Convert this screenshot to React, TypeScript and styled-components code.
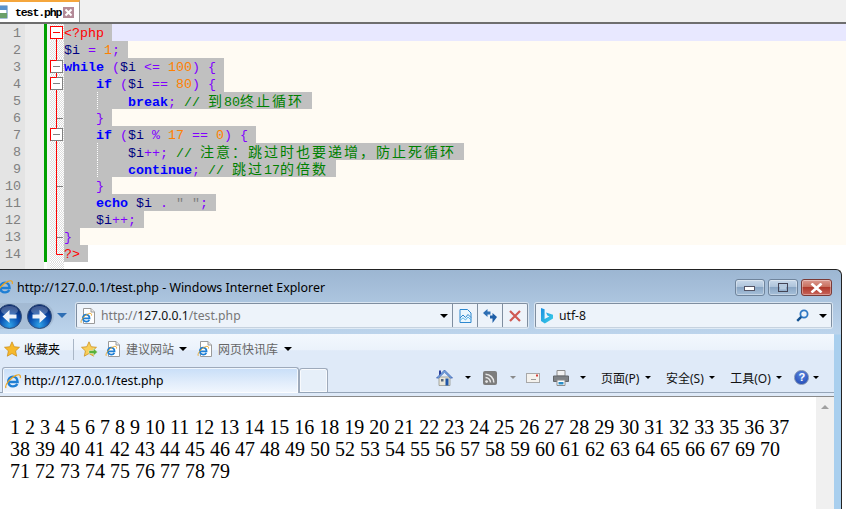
import React from "react";
import styled, { createGlobalStyle } from "styled-components";

const Global = createGlobalStyle`
  html, body { margin: 0; padding: 0; background: #fff; overflow: hidden; }
`;

const UI_FONT = `"Noto Sans", "Noto Sans CJK SC", sans-serif`;

const Page = styled.div`
  width: 846px;
  height: 509px;
  display: flex;
  flex-direction: column;
  overflow: hidden;
  background: #fff;
`;

/* ---------- editor ---------- */
const TabStrip = styled.div`
  height: 22px;
  display: flex;
  background: #f0f0f0;
  border-bottom: 2px solid #6e6e6e;
`;
const EditorTab = styled.div`
  width: 80px;
  box-sizing: border-box;
  border-top: 2px solid #f5a63c;
  border-right: 1px solid #9a9a9a;
  background: #fff;
  display: flex;
  align-items: center;
  color: #000;
`;
const TabName = styled.span`
  margin: 0 2px 0 7px;
  font: 700 11.5px "Liberation Mono", monospace;
  letter-spacing: -1.1px;
  white-space: pre;
`;
const Editor = styled.div`
  display: flex;
  flex-direction: column;
  height: 245px;
`;
const Row = styled.div<{ $h?: number }>`
  display: flex;
  height: ${(p) => p.$h ?? 17}px;
  flex: none;
`;
const Gutter = styled.div`
  width: 44px;
  height: 100%;
  box-sizing: border-box;
  background: linear-gradient(90deg, #e4e4e4 0 25px, #ececec 25px);
  color: #808080;
  font: 13.33px/20px "Liberation Mono", monospace;
`;
const LineNo = styled.div`
  width: 21px;
  height: 17px;
  text-align: right;
`;
const Bar = styled.div<{ $on: boolean }>`
  width: 3px;
  margin-right: 3px;
  background: ${(p) => (p.$on ? "#00a000" : "transparent")};
  box-shadow: 3px 0 0 #f4f4f4;
`;
const FoldCol = styled.div`
  width: 14px;
  height: 100%;
  background: repeating-conic-gradient(#dcdcdc 0 25%, #fff 0 50%) 0 0 / 2px 2px;
  svg { display: block; }
`;
const Code = styled.div<{ $bg: string }>`
  flex: 1;
  height: 100%;
  background: ${(p) => p.$bg};
  font: 13.33px/20px "Liberation Mono", monospace;
  white-space: pre;
`;
const Sel = styled.span`
  display: inline-block;
  vertical-align: top;
  height: 17px;
  background: #c0c0c0;
  padding-right: 8px;
  color: #000;
`;
const Guide = styled.span`
  display: inline-block;
  vertical-align: top;
  width: 64px;
  height: 17px;
  background: repeating-linear-gradient(#fff 0 1px, transparent 1px 2px) 33px 0 / 1px 100% no-repeat;
`;
const Kw = styled.b`color: #0000ff; font-weight: 700;`;
const Var = styled.span`color: #000080;`;
const Op = styled.span`color: #8000ff;`;
const Num = styled.span`color: #ff8000;`;
const Str = styled.span`color: #808080;`;
const Tag = styled.span`color: #ff0000;`;
const Cm = styled.span`color: #008000;`;
const Cjk = styled.span`
  font: 14px/17px "Noto Sans CJK SC", sans-serif;
  letter-spacing: 2px;
  color: #008000;
`;

type FoldKind = "open" | "box" | "line" | "tick" | "end" | "none";
const Fold = ({ kind }: { kind: FoldKind }) => (
  <svg width="14" height="17" viewBox="0 0 14 17">
    {kind === "open" && (
      <>
        <rect x="0.5" y="2.5" width="12" height="12" fill="#fff" stroke="#ff0000" />
        <path d="M3 8.5h7" stroke="#ff0000" />
        <path d="M6.5 15v2" stroke="#ff0000" />
      </>
    )}
    {kind === "box" && (
      <>
        <path d="M6.5 0v2M6.5 15v2" stroke="#ff0000" />
        <rect x="0.5" y="2.5" width="12" height="12" fill="#fff" stroke="#808080" />
        <path d="M0.5 14.5v-12h6" fill="none" stroke="#ff0000" />
        <path d="M3 8.5h7" stroke="#808080" />
      </>
    )}
    {kind === "line" && <path d="M6.5 0v17" stroke="#ff0000" />}
    {kind === "tick" && (
      <>
        <path d="M6.5 0v17" stroke="#ff0000" />
        <path d="M7 9.5h6" stroke="#808080" />
      </>
    )}
    {kind === "end" && <path d="M6.5 0v9.5h6.5" fill="none" stroke="#ff0000" />}
  </svg>
);

const lines: { fold: FoldKind; guide?: boolean; content: React.ReactNode }[] = [
  { fold: "open", content: <Tag>{"<?php"}</Tag> },
  { fold: "line", content: <><Var>$i</Var> <Op>=</Op> <Num>1</Num><Op>;</Op></> },
  { fold: "box", content: <><Kw>while</Kw> <Op>(</Op><Var>$i</Var> <Op>{"<="}</Op> <Num>100</Num><Op>)</Op> <Op>{"{"}</Op></> },
  { fold: "box", content: <>{"    "}<Kw>if</Kw> <Op>(</Op><Var>$i</Var> <Op>==</Op> <Num>80</Num><Op>)</Op> <Op>{"{"}</Op></> },
  { fold: "line", guide: true, content: <><Kw>break</Kw><Op>;</Op> <Cm>// </Cm><Cjk>到</Cjk><Cm>80</Cm><Cjk>终止循环</Cjk></> },
  { fold: "tick", content: <>{"    "}<Op>{"}"}</Op></> },
  { fold: "box", content: <>{"    "}<Kw>if</Kw> <Op>(</Op><Var>$i</Var> <Op>%</Op> <Num>17</Num> <Op>==</Op> <Num>0</Num><Op>)</Op> <Op>{"{"}</Op></> },
  { fold: "line", guide: true, content: <><Var>$i</Var><Op>++;</Op> <Cm>// </Cm><Cjk>注意：跳过时也要递增，防止死循环</Cjk></> },
  { fold: "line", guide: true, content: <><Kw>continue</Kw><Op>;</Op> <Cm>// </Cm><Cjk>跳过</Cjk><Cm>17</Cm><Cjk>的倍数</Cjk></> },
  { fold: "tick", content: <>{"    "}<Op>{"}"}</Op></> },
  { fold: "line", content: <>{"    "}<Kw>echo</Kw> <Var>$i</Var> <Op>.</Op> <Str>{'" "'}</Str><Op>;</Op></> },
  { fold: "line", content: <>{"    "}<Var>$i</Var><Op>++;</Op></> },
  { fold: "tick", content: <Op>{"}"}</Op> },
  { fold: "end", content: <Tag>{"?>"}</Tag> },
];

/* ---------- browser window ---------- */
const Win = styled.div`
  width: 842px;
  flex: 1;
  min-height: 0;
  box-sizing: border-box;
  border-top: 1px solid #222;
  border-right: 1px solid #222;
  border-top-right-radius: 6px;
  display: flex;
  flex-direction: column;
  background: linear-gradient(#9cb6d2 0, #bcd4ec 64px, #a9cfee 65px);
  overflow: hidden;
`;
const TitleBar = styled.div`
  height: 28px;
  flex: none;
  display: flex;
  align-items: flex-start;
  box-sizing: border-box;
  padding-top: 9px;
  font: 12.4px/17px ${UI_FONT};
  color: #000;
`;
const TitleIcon = styled.span`
  margin-left: -3px;
  display: flex;
`;
const TitleText = styled.span`
  margin-left: 4px;
  flex: 1;
  white-space: nowrap;
`;
const Caption = styled.div`
  display: flex;
  gap: 3px;
  margin: 0 9px 0 0;
`;
const CapBtn = styled.div<{ $close?: boolean }>`
  width: ${(p) => (p.$close ? 31 : 30)}px;
  height: 17px;
  box-sizing: border-box;
  border: 1px solid ${(p) => (p.$close ? "#7a3a36" : "#6f849c")};
  border-radius: 3px;
  display: flex;
  align-items: center;
  justify-content: center;
  background: ${(p) =>
    p.$close
      ? "linear-gradient(#dc9a90 0, #c8705f 45%, #b03a2c 50%, #c8645a 100%)"
      : "linear-gradient(#c9d9ea 0, #aec4db 45%, #8aa6c4 50%, #a7c0da 100%)"};
  box-shadow: inset 0 0 0 1px rgba(255, 255, 255, 0.35);
`;
const NavBar = styled.div`
  height: 36px;
  flex: none;
  display: flex;
  align-items: flex-start;
  padding-top: 5px;
  box-sizing: border-box;
`;
const NavPill = styled.div`
  width: 54px;
  height: 26px;
  display: flex;
  gap: 5px;
  align-items: center;
  border-radius: 0 14px 14px 0;
  background: rgba(150, 170, 195, 0.45);
  svg { flex: none; display: block; }
`;
const BackSlot = styled.span`
  margin-left: -3px;
  display: flex;
`;
const Caret = styled.span<{ $c?: string; $ml?: number; $mr?: number; $mt?: number; $w?: number }>`
  flex: none;
  width: 0;
  height: 0;
  margin: ${(p) => p.$mt ?? 0}px ${(p) => p.$mr ?? 0}px 0 ${(p) => p.$ml ?? 0}px;
  border-left: ${(p) => p.$w ?? 4.5}px solid transparent;
  border-right: ${(p) => p.$w ?? 4.5}px solid transparent;
  border-top: ${(p) => p.$w ?? 4.5}px solid ${(p) => p.$c ?? "#000"};
`;
const Field = styled.div<{ $w: number; $ml: number }>`
  width: ${(p) => p.$w}px;
  margin-left: ${(p) => p.$ml}px;
  height: 25px;
  box-sizing: border-box;
  border: 1px solid #7f8ea0;
  border-bottom-color: #c6d2df;
  border-radius: 2px;
  background: #edf3fa;
  box-shadow: 0 0 0 1px rgba(255, 255, 255, 0.55);
  display: flex;
  align-items: center;
  font: 12.2px ${UI_FONT};
  overflow: hidden;
  svg { flex: none; display: block; }
`;
const FieldIcon = styled.span<{ $ml: number }>`
  margin-left: ${(p) => p.$ml}px;
  display: flex;
`;
const Url = styled.span`
  color: #777;
  margin-left: 5px;
  flex: 1;
  white-space: nowrap;
`;
const Host = styled.span`color: #111;`;
const FieldBtn = styled.div`
  width: 25px;
  height: 100%;
  flex: none;
  border-left: 1px solid #7f8ea0;
  box-sizing: border-box;
  display: flex;
  align-items: center;
  justify-content: center;
`;
const SearchText = styled.span`
  flex: 1;
  margin-left: 6px;
  color: #111;
`;
const Panel = styled.div`
  width: 834px;
  flex: 1;
  min-height: 0;
  display: flex;
  flex-direction: column;
  background: #fff;
`;
const FavBar = styled.div`
  height: 32px;
  flex: none;
  display: flex;
  align-items: center;
  padding: 0 0 2px 4px;
  box-sizing: border-box;
  background: linear-gradient(#f3f8fe 0, #ebf2fb 50%, #dfeaf8 52%);
  font: 12px ${UI_FONT};
  svg { flex: none; display: block; }
`;
const FavLabel = styled.span<{ $ml: number; $muted?: boolean }>`
  margin-left: ${(p) => p.$ml}px;
  color: ${(p) => (p.$muted ? "#666" : "#000")};
  white-space: nowrap;
`;
const FavIcon = styled.span<{ $ml: number }>`
  margin-left: ${(p) => p.$ml}px;
  display: flex;
`;
const VRule = styled.span`
  width: 1px;
  height: 21px;
  margin-left: 13px;
  background: #a9b6c6;
`;
const TabBar = styled.div`
  height: 27px;
  flex: none;
  display: flex;
  align-items: flex-start;
  box-sizing: border-box;
  background: #dfeaf8;
  border-bottom: 1px solid #95a5b8;
`;
const PageTab = styled.div`
  width: 297px;
  height: 26px;
  margin: 1px 0 0 2px;
  box-sizing: border-box;
  border: 1px solid #9eaabb;
  border-bottom: 0;
  border-radius: 3px 3px 0 0;
  background: linear-gradient(#c8def8 0, #e0ecfb 55%, #f2f7fe 100%);
  box-shadow: inset 0 0 0 1px rgba(255, 255, 255, 0.7);
  display: flex;
  align-items: center;
  padding-left: 2px;
  font: 12.2px ${UI_FONT};
  svg { flex: none; display: block; }
`;
const PageTabText = styled.span`margin-left: 3px; white-space: nowrap;`;
const NewTab = styled.div`
  width: 29px;
  height: 24px;
  margin-top: 2px;
  box-sizing: border-box;
  border: 1px solid #9eaabb;
  border-bottom: 0;
  border-radius: 3px 3px 0 0;
  background: #e6eff9;
  box-shadow: inset 0 0 0 1px rgba(255, 255, 255, 0.7);
`;
const CmdBar = styled.div`
  display: flex;
  align-items: center;
  height: 23px;
  margin: 0 0 0 108px;
  font: 12px ${UI_FONT};
  white-space: nowrap;
  svg { flex: none; display: block; }
`;
const CmdLabel = styled.span<{ $ml: number }>`
  margin-left: ${(p) => p.$ml}px;
  color: #111;
`;
const CmdIcon = styled.span<{ $ml: number }>`
  margin-left: ${(p) => p.$ml}px;
  display: flex;
`;
const Help = styled.span`
  width: 15px;
  height: 15px;
  margin-left: 12px;
  border-radius: 50%;
  flex: none;
  border: 1px solid #7d8fb0;
  box-sizing: border-box;
  background: radial-gradient(circle at 50% 30%, #5a86e0, #1c44b0);
  color: #fff;
  font: 700 11px/13px "Liberation Sans", sans-serif;
  text-align: center;
`;
const PanelGap = styled.div`
  height: 3px;
  flex: none;
  background: #dfeaf8;
  border-bottom: 1px solid #8a8a8a;
  box-shadow: 0 1px 0 #a8a8a8;
`;
const Viewport = styled.div`
  flex: 1;
  min-height: 0;
  display: flex;
  background: #fff;
`;
const Doc = styled.div`
  flex: 1;
  padding: 19px 20px 0 10px;
  font: 20px/22px "Liberation Serif", serif;
  color: #000;
`;
const ScrollTrack = styled.div`
  width: 18px;
  flex: none;
  background: #f0f0f0;
  display: flex;
  justify-content: center;
  padding-top: 8px;
  box-sizing: border-box;
`;
const ScrollUp = styled.span`
  width: 0;
  height: 0;
  border-left: 4px solid transparent;
  border-right: 4px solid transparent;
  border-bottom: 4px solid #a0a0a0;
`;

/* ---------- icons ---------- */
const IeGlyph = ({ x = 0, y = 0, s = 1 }: { x?: number; y?: number; s?: number }) => (
  <g transform={`translate(${x} ${y}) scale(${s})`}>
    <path
      d="M3.8 9H12.6C12.6 5.6 10.5 3.6 8 3.6 5.2 3.6 3.2 6 3.2 8.6 3.2 11.6 5.2 13.4 8 13.4 10 13.4 11.5 12.5 12.3 11"
      fill="none"
      stroke="#1f7fd4"
      strokeWidth="2.4"
    />
    <path d="M1 15C-.6 12 5 5 11 2.4 14 1.1 16 1.8 15.2 5" fill="none" stroke="#eda51f" strokeWidth="1.2" />
  </g>
);
const IeIcon = () => (
  <svg width="16" height="16" viewBox="0 0 16 16"><IeGlyph /></svg>
);
const PageIe = () => (
  <svg width="16" height="18" viewBox="0 0 16 18">
    <path d="M3.5 1.5H11L14.5 5V16.5H3.5Z" fill="#fff" stroke="#9a9a9a" />
    <path d="M11 1.5V5H14.5" fill="#e8e8e8" stroke="#9a9a9a" />
    <IeGlyph x={0.5} y={5} s={0.72} />
  </svg>
);
const RoundArrow = ({ back, id }: { back?: boolean; id: string }) => (
  <svg width="25" height="25" viewBox="0 0 25 25">
    <defs>
      <radialGradient id={id} cx="50%" cy="85%" r="75%">
        <stop offset="0" stopColor="#2fa3e8" />
        <stop offset="0.55" stopColor="#0a4fb0" />
        <stop offset="1" stopColor="#04266e" />
      </radialGradient>
    </defs>
    <circle cx="12.5" cy="12.5" r="12" fill={`url(#${id})`} stroke="#35507a" />
    <ellipse cx="12.5" cy="6.5" rx="8.5" ry="4.5" fill="#fff" opacity="0.25" />
    <path
      transform={back ? "translate(25 0) scale(-1 1)" : undefined}
      d="M5.5 10.5H12.5V6L19.5 12.5 12.5 19V14.5H5.5Z"
      fill="#eef3fa"
    />
  </svg>
);
const Star = () => (
  <svg width="16" height="16" viewBox="0 0 16 16">
    <path d="M8 .8 10.2 5.7 15.5 6.3 11.6 9.9 12.7 15.2 8 12.5 3.3 15.2 4.4 9.9.5 6.3 5.8 5.7Z" fill="#f6b92c" stroke="#c98a14" strokeWidth=".7" />
  </svg>
);
const StarAdd = () => (
  <svg width="17" height="16" viewBox="0 0 17 16">
    <path d="M8 .8 10.2 5.7 15.5 6.3 11.6 9.9 12.7 15.2 8 12.5 3.3 15.2 4.4 9.9.5 6.3 5.8 5.7Z" fill="#f8ce5a" stroke="#c98a14" strokeWidth=".7" />
    <path d="M8 9.5h4.5V7.3L16.5 11l-4 3.7v-2.2H8Z" fill="#58b23c" stroke="#fff" strokeWidth=".4" />
  </svg>
);
const Compat = () => (
  <svg width="13" height="14" viewBox="0 0 13 14">
    <path d="M1 .5H8.5L12 4V13.5H1Z" fill="#eaf6fd" stroke="#2c87cf" />
    <path d="M1 9 4 6 6.5 8.5 9 5.5 12 8.5" fill="none" stroke="#2c87cf" />
    <path d="M1 11.5 4 8.8 6.5 11 9 8 12 11" fill="none" stroke="#5cb6ea" />
  </svg>
);
const Refresh = () => (
  <svg width="14" height="14" viewBox="0 0 14 14">
    <path d="M0 4 4.5 0V2.4H7.5V5.6H4.5V8Z" fill="#2f6fb4" />
    <path d="M14 8 9.5 4V6.4H7V9.6H9.5V14Z" fill="#1f5fa8" />
  </svg>
);
const RedX = () => (
  <svg width="12" height="12" viewBox="0 0 12 12">
    <path d="M1 1 11 11M11 1 1 11" stroke="#d05a52" strokeWidth="2.2" />
  </svg>
);
const Bing = () => (
  <svg width="12" height="16" viewBox="0 0 12 16">
    <defs>
      <linearGradient id="bingG" x1="0" y1="0" x2="1" y2="1">
        <stop offset="0" stopColor="#1a8fe0" />
        <stop offset="1" stopColor="#3ad0e8" />
      </linearGradient>
    </defs>
    <path d="M0 0 3.6 1.3V11L8.4 8.4 6.4 7.4 5 4.4 12 6.8V10.6L3.8 15.5 0 13Z" fill="url(#bingG)" />
  </svg>
);
const Lens = () => (
  <svg width="13" height="13" viewBox="0 0 13 13">
    <circle cx="8" cy="5" r="3.6" fill="none" stroke="#2f78c4" strokeWidth="1.8" />
    <path d="M5.2 7.8 1.2 11.8" stroke="#12508f" strokeWidth="2.4" />
  </svg>
);
const Home = () => (
  <svg width="17" height="17" viewBox="0 0 17 17">
    <path d="M3 8H14V16.5H3Z" fill="#e9e6da" stroke="#8a8a80" strokeWidth=".7" />
    <path d="M.5 9 8.5 1 16.5 9 14.5 9 8.5 3.2 2.5 9Z" fill="#7fb2e6" stroke="#2a4fa8" strokeWidth=".7" />
    <path d="M3 1.5H5V4.5L3 6.5Z" fill="#2a3f9c" />
    <path d="M9.5 9.5H12.5V16.5H9.5Z" fill="#1f56a8" />
    <path d="M5 10H7.5V12.5H5Z" fill="#55657a" />
  </svg>
);
const Rss = () => (
  <svg width="14" height="14" viewBox="0 0 14 14">
    <rect width="14" height="14" rx="2" fill="#7d7d7d" />
    <circle cx="3.6" cy="10.6" r="1.4" fill="#e6e6e6" />
    <path d="M2.5 6.5A5 5 0 0 1 7.5 11.5M2.5 3.2A8.3 8.3 0 0 1 10.8 11.5" fill="none" stroke="#e6e6e6" strokeWidth="1.5" />
  </svg>
);
const Mail = () => (
  <svg width="14" height="10" viewBox="0 0 14 10">
    <rect x=".5" y=".5" width="13" height="9" fill="#f4f2ee" stroke="#a8a8a8" />
    <path d="M5 6.5H10" stroke="#9a9a9a" />
    <rect x="10" y="1.5" width="2" height="2" fill="#d8403a" />
  </svg>
);
const Printer = () => (
  <svg width="16" height="16" viewBox="0 0 16 16">
    <path d="M4 .5H12V6H4Z" fill="#f2f2f2" stroke="#8c8c8c" />
    <path d="M.5 6H15.5V11.5H.5Z" fill="#7e8286" stroke="#62666a" />
    <path d="M4 10H12V15.5H4Z" fill="#fff" stroke="#8c8c8c" />
    <path d="M5.5 12H10.5V14.5H5.5Z" fill="#2a8ec8" />
  </svg>
);

const numbers: number[] = [];
for (let i = 1; i < 80; i++) if (i % 17 !== 0) numbers.push(i);

export default function App() {
  return (
    <Page>
      <Global />
      <TabStrip>
        <EditorTab>
          <svg width="8" height="14" viewBox="0 0 8 14">
            <rect x="-6" y="1" width="13" height="12" fill="#fff" stroke="#4f7fb4" />
            <rect x="-6" y="1" width="13" height="4" fill="#5b93cc" />
            <rect x="-6" y="8" width="13" height="5" fill="#6a9f6a" />
          </svg>
          <TabName>test.php</TabName>
          <svg width="11" height="11" viewBox="0 0 11 11">
            <rect width="11" height="11" fill="#b48a98" />
            <path d="M2.5 2.5 8.5 8.5M8.5 2.5 2.5 8.5" stroke="#fff" strokeWidth="2" />
          </svg>
        </EditorTab>
      </TabStrip>
      <Editor>
        {lines.map((l, i) => (
          <Row key={i}>
            <Gutter><LineNo>{i + 1}</LineNo></Gutter>
            <Bar $on />
            <FoldCol><Fold kind={l.fold} /></FoldCol>
            <Code $bg={i === 0 ? "#e8e8ff" : i === 13 ? "#fff" : "#fffbf3"}>
              <Sel>{l.guide && <Guide />}{l.content}</Sel>
            </Code>
          </Row>
        ))}
        <Row $h={7}>
          <Gutter />
          <Bar $on={false} />
          <FoldCol />
          <Code $bg="#fff" />
        </Row>
      </Editor>
      <Win>
        <TitleBar>
          <TitleIcon><IeIcon /></TitleIcon>
          <TitleText>http://127.0.0.1/test.php - Windows Internet Explorer</TitleText>
          <Caption>
            <CapBtn>
              <svg width="12" height="7" viewBox="0 0 12 7"><rect x=".5" y="2.5" width="10" height="4" fill="#fff" stroke="#556" /></svg>
            </CapBtn>
            <CapBtn>
              <svg width="12" height="10" viewBox="0 0 12 10"><rect x="1.5" y=".5" width="9" height="8" fill="none" stroke="#445" strokeWidth="1" /><rect x="3" y="3" width="6" height="3.5" fill="#b6cade" /></svg>
            </CapBtn>
            <CapBtn $close>
              <svg width="13" height="10" viewBox="0 0 13 10"><path d="M1.5 .5 11.5 9.5M11.5 .5 1.5 9.5" stroke="#fff" strokeWidth="2.6" /></svg>
            </CapBtn>
          </Caption>
        </TitleBar>
        <NavBar>
          <NavPill>
            <BackSlot><RoundArrow back id="navA" /></BackSlot>
            <RoundArrow id="navB" />
          </NavPill>
          <Caret $c="#2f6fb4" $ml={3} $w={5} $mt={10} />
          <Field $w={452} $ml={9}>
            <FieldIcon $ml={3}><PageIe /></FieldIcon>
            <Url>http://<Host>127.0.0.1</Host>/test.php</Url>
            <Caret $w={4} $mr={4} />
            <FieldBtn><Compat /></FieldBtn>
            <FieldBtn><Refresh /></FieldBtn>
            <FieldBtn><RedX /></FieldBtn>
          </Field>
          <Field $w={297} $ml={7}>
            <FieldIcon $ml={5}><Bing /></FieldIcon>
            <SearchText>utf-8</SearchText>
            <Lens />
            <Caret $w={4} $ml={10} $mr={4} />
          </Field>
        </NavBar>
        <Panel>
          <FavBar>
            <Star />
            <FavLabel $ml={4}>收藏夹</FavLabel>
            <VRule />
            <FavIcon $ml={7}><StarAdd /></FavIcon>
            <FavIcon $ml={7}><PageIe /></FavIcon>
            <FavLabel $ml={5} $muted>建议网站</FavLabel>
            <Caret $ml={5} />
            <FavIcon $ml={10}><PageIe /></FavIcon>
            <FavLabel $ml={5} $muted>网页快讯库</FavLabel>
            <Caret $ml={6} />
          </FavBar>
          <TabBar>
            <PageTab>
              <IeIcon />
              <PageTabText>http://127.0.0.1/test.php</PageTabText>
            </PageTab>
            <NewTab />
            <CmdBar>
              <Home />
              <Caret $ml={11.5} $w={3.5} />
              <CmdIcon $ml={12.5}><Rss /></CmdIcon>
              <Caret $ml={12.5} $w={3.5} $c="#8a8a8a" />
              <CmdIcon $ml={10.5}><Mail /></CmdIcon>
              <CmdIcon $ml={13}><Printer /></CmdIcon>
              <Caret $ml={10.5} $w={3.5} />
              <CmdLabel $ml={15.5}>页面(P)</CmdLabel>
              <Caret $ml={5.5} $w={3.5} />
              <CmdLabel $ml={15}>安全(S)</CmdLabel>
              <Caret $ml={5.5} $w={3.5} />
              <CmdLabel $ml={15}>工具(O)</CmdLabel>
              <Caret $ml={5.5} $w={3.5} />
              <Help>?</Help>
              <Caret $ml={3.5} $w={3.5} />
            </CmdBar>
          </TabBar>
          <PanelGap />
          <Viewport>
            <Doc>{numbers.join(" ")}</Doc>
            <ScrollTrack><ScrollUp /></ScrollTrack>
          </Viewport>
        </Panel>
      </Win>
    </Page>
  );
}
